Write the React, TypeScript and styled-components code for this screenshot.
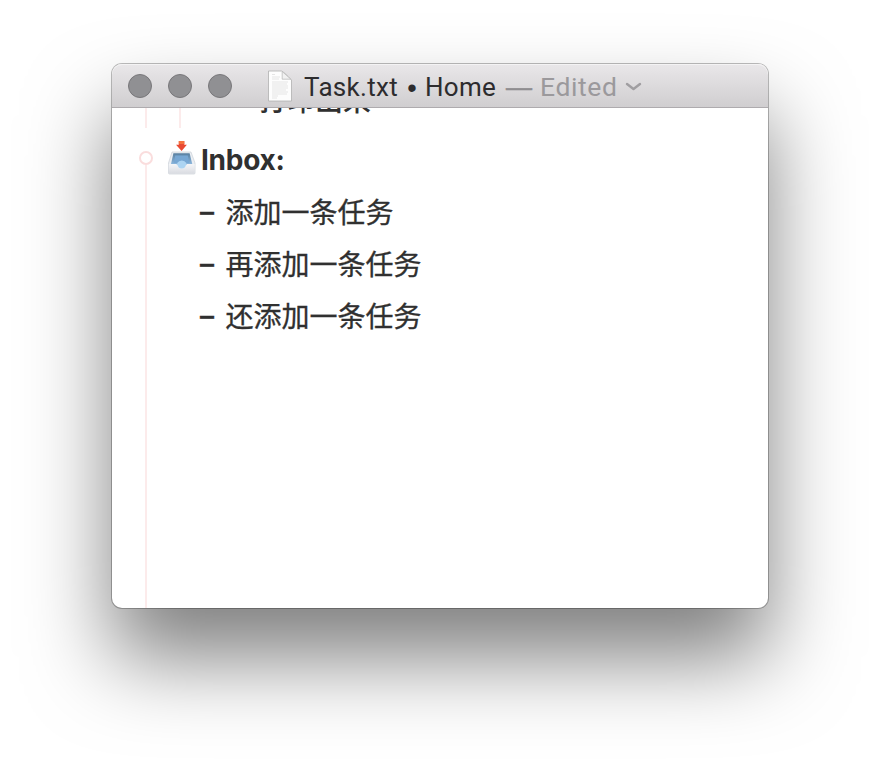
import React from "react";
import styled, { createGlobalStyle } from "styled-components";

const GlobalStyle = createGlobalStyle`
  * { box-sizing: border-box; }
  body { margin: 0; background: #fff; overflow: hidden; }
`;

const Desktop = styled.main`
  width: 880px;
  height: 768px;
  padding: 64px 112px 160px;
  background: #fff;
`;

const Window = styled.section`
  display: flex;
  flex-direction: column;
  width: 656px;
  height: 544px;
  border-radius: 10px;
  background: #fff;
  box-shadow: 0 0 0 1px rgba(0, 0, 0, 0.26), 0 50px 84px rgba(0, 0, 0, 0.5);
`;

const TitleBar = styled.header`
  display: flex;
  align-items: center;
  flex: none;
  height: 44px;
  padding: 1px 16px 0;
  border-radius: 10px 10px 0 0;
  border-bottom: 1px solid #aeabae;
  background: linear-gradient(#e9e7e9, #d0ced0);
  box-shadow: inset 0 1px 0 #f4f3f4;
`;

const Controls = styled.div`
  display: flex;
  gap: 16px;
  margin-right: 35px;
`;

const Control = styled.span`
  width: 24px;
  height: 24px;
  border: 1px solid #78777a;
  border-radius: 50%;
  background: #909093;
`;

const Title = styled.h1`
  display: flex;
  align-items: center;
  margin: 2px 0 0 11px;
  color: #2d2c2e;
  font: 400 26px/32px Roboto, sans-serif;
  white-space: pre;
`;

const Name = styled.span<{ $width: number }>`
  width: ${(p) => p.$width}px;
  letter-spacing: 0.3px;
`;

const Bullet = styled.span`
  width: 16px;
  margin: 2px 5px 0 6px;
  font: 400 27px/32px "Liberation Sans", sans-serif;
  text-align: center;
`;

const Separator = styled.span`
  width: 26px;
  margin: 0 8px 0 11px;
  color: #8f8d90;
  font: 400 26px/32px "Liberation Sans", sans-serif;
  -webkit-text-stroke: 0.5px #8f8d90;
`;

const Status = styled.span`
  width: 85px;
  color: #9b999c;
  font-size: 26.5px;
  letter-spacing: 0.6px;
`;

const Editor = styled.div`
  display: flex;
  flex-direction: column;
  flex: 1;
  min-height: 0;
  overflow: hidden;
  padding-left: 33px;
  border-radius: 0 0 10px 10px;
  color: #303030;
  font: 400 28px/52px Inter, "Noto Sans CJK SC", sans-serif;
`;

const PreviousRow = styled.div`
  display: flex;
  flex: none;
  height: 26px;
`;

const Guide = styled.span`
  flex: none;
  width: 2px;
  height: 20px;
  margin-right: 32px;
  background: #fcebeb;
`;

const ClippedText = styled.span`
  margin: -33px 0 0 46px;
  font-weight: 500;
`;

const Group = styled.div`
  display: flex;
  flex: 1;
  min-height: 0;
`;

const Outline = styled.div`
  display: flex;
  flex-direction: column;
  align-items: center;
  flex: none;
  width: 14px;
  margin-left: -6px;
  padding-top: 17px;
`;

const Marker = styled.span`
  flex: none;
  width: 14px;
  height: 14px;
  border: 2px solid #fadddd;
  border-radius: 50%;
`;

const GroupLine = styled.span`
  flex: 1;
  width: 2px;
  background: #fcebeb;
`;

const Items = styled.div`
  padding-left: 15px;
`;

const Heading = styled.h2`
  display: flex;
  margin: 0;
  height: 52px;
  font: 700 28px/53px Inter, sans-serif;
  letter-spacing: -0.25px;
`;

const Task = styled.div`
  display: flex;
  align-items: center;
  height: 52px;
  padding: 1px 0 0 32px;
  white-space: nowrap;
  -webkit-text-stroke: 0.3px #303030;
`;

const Dash = styled.span`
  width: 25.6px;
  margin-top: -2px;
  line-height: 50px;
  font-weight: 500;
`;

const TrayBox = styled.span`
  flex: none;
  width: 33px;
  height: 52px;
  padding-top: 4px;
  line-height: 0;
`;

const TrayIcon = () => (
  <svg width="28" height="37" viewBox="0 0 28 37">
    <defs>
      <linearGradient id="tray" x2="0" y2="1">
        <stop stopColor="#587f9f" />
        <stop offset="1" stopColor="#8db8df" />
      </linearGradient>
      <linearGradient id="front" x2="0" y2="1">
        <stop stopColor="#f5f6f8" />
        <stop offset="1" stopColor="#d9dbe1" />
      </linearGradient>
    </defs>
    <path d="M4 14H23L27 25V35Q27 36 26 36H1.5Q.5 36 .5 35V25Z" fill="#eceff3" stroke="#c5cad2" strokeWidth=".6" />
    <path d="M5.4 15.2H21.6L24.4 26.5H2.9Z" fill="url(#tray)" />
    <path d="M7.2 17.5H19.8L21.3 25H5.8Z" fill="#77a7d3" />
    <path d="M.8 26H8.5Q9.4 31 13.7 31T19 26H26.7V34.8Q26.7 35.7 25.8 35.7H1.7Q.8 35.7.8 34.8Z" fill="url(#front)" />
    <path d="M9.2 25Q9.5 30.5 13.7 30.5T18.4 25Q16.8 22.5 13.8 22.5T9.2 25Z" fill="#acd4f2" />
    <path d="M10.8 3H16.3V6.7H18.9L13.6 13L8 6.7H10.8Z" fill="#e94a33" />
    <path d="M10.8 3H16.3V6H10.8Z" fill="#f4723e" />
  </svg>
);

const DocumentIcon = () => (
  <svg width="26" height="34" viewBox="0 0 26 34">
    <path d="M1.5 2H14.5Q17 3 24.5 11V32H1.5Z" fill="#fdfdfd" stroke="#b0b0b0" strokeWidth=".8" />
    <path d="M15.2 2.5V10.2H23.8Z" fill="#f1f1f1" stroke="#bbb" strokeWidth=".8" />
    <path
      d="M5 5.5H8M5 8H13M5 10H12M5 13H21M5 15H20M5 17H21M5 19H21M5 21H19M5 23H21M5 25H20M5 27H11M5 29H10"
      stroke="#dadada"
      strokeWidth=".7"
      fill="none"
    />
  </svg>
);

const Chevron = () => (
  <svg width="17" height="10" viewBox="0 0 17 10" fill="none" stroke="#a09ea1" strokeWidth="2.4" strokeLinecap="round" strokeLinejoin="round">
    <path d="M2 2L8.5 7L15 2" />
  </svg>
);

const tasks = ["添加一条任务", "再添加一条任务", "还添加一条任务"];

export default function App() {
  return (
    <>
      <GlobalStyle />
      <Desktop>
        <Window>
          <TitleBar>
            <Controls>
              <Control />
              <Control />
              <Control />
            </Controls>
            <DocumentIcon />
            <Title>
              <Name $width={94}>Task.txt</Name>
              <Bullet>•</Bullet>
              <Name $width={70}>Home</Name>
              <Separator>—</Separator>
              <Status>Edited</Status>
              <Chevron />
            </Title>
          </TitleBar>
          <Editor>
            <PreviousRow>
              <Guide />
              <Guide />
              <ClippedText>打印出来</ClippedText>
            </PreviousRow>
            <Group>
              <Outline>
                <Marker />
                <GroupLine />
              </Outline>
              <Items>
                <Heading>
                  <TrayBox>
                    <TrayIcon />
                  </TrayBox>
                  Inbox:
                </Heading>
                {tasks.map((task) => (
                  <Task key={task}>
                    <Dash>–</Dash>
                    {task}
                  </Task>
                ))}
              </Items>
            </Group>
          </Editor>
        </Window>
      </Desktop>
    </>
  );
}
